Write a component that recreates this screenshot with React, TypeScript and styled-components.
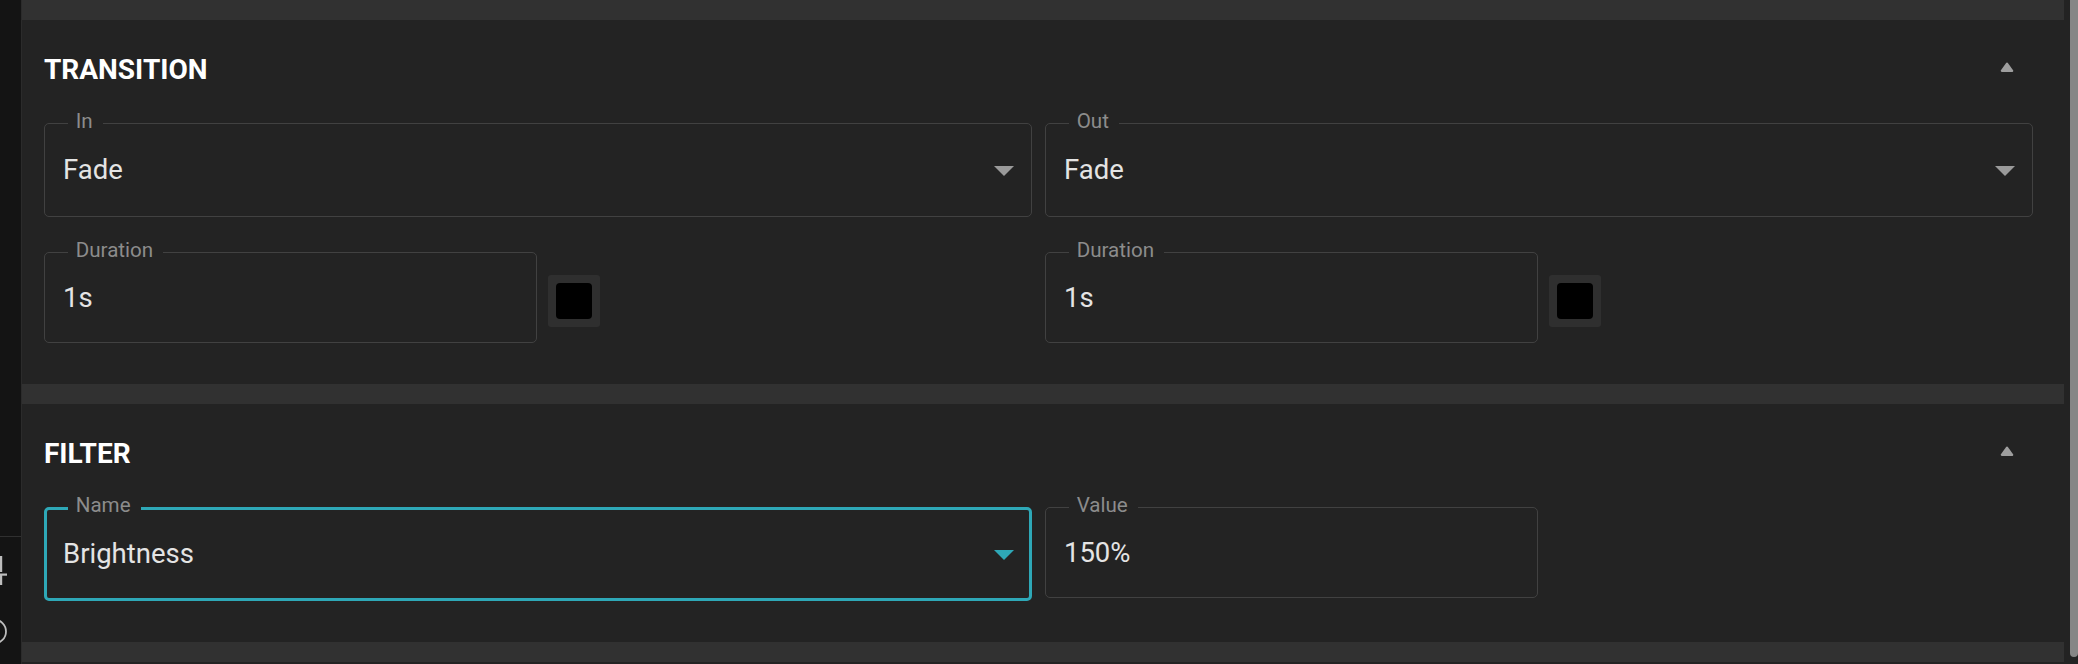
import React from "react";
import styled, { createGlobalStyle } from "styled-components";

const GlobalStyle = createGlobalStyle`
  html, body { margin: 0; padding: 0; background: #232323; }
  body { font-family: Roboto, "Noto Sans", Arial, sans-serif; overflow: hidden; }
  *, *::before, *::after { box-sizing: border-box; }
`;

const CYAN = "#2ea8b7";

const Screen = styled.div`
  display: flex;
  width: 2078px;
  height: 664px;
  background: #232323;
`;

const SideRail = styled.aside`
  width: 22px;
  flex: none;
  background: #141414;
  border-right: 1px solid #2b2b2b;
  display: flex;
  flex-direction: column;
  overflow: hidden;
`;

const RailTop = styled.div`
  height: 537px;
  border-bottom: 1px solid #303030;
  flex: none;
`;

const RailIcon = styled.svg<{ $gap: number }>`
  display: block;
  margin-top: ${(p) => p.$gap}px;
  color: #bdbdbd;
  flex: none;
`;

const Main = styled.main`
  width: 2042px;
  flex: none;
  align-self: flex-start;
  background: #313131;
  display: flex;
  flex-direction: column;
  gap: 20px;
  padding: 20px 0;
`;

const Gutter = styled.div`
  width: 6px;
  flex: none;
`;

const ScrollThumb = styled.div`
  width: 8px;
  height: 657px;
  flex: none;
  background: #868686;
  border-radius: 0 0 4px 4px;
`;

const Panel = styled.section`
  background: #232323;
  padding: 36px 30.7px 41px 22px;
  display: flex;
  flex-direction: column;
`;

const PanelHeader = styled.header`
  display: flex;
  justify-content: space-between;
  align-items: flex-start;
  height: 28px;
`;

const PanelTitle = styled.h2`
  margin: 0;
  font-family: Roboto, "Noto Sans", Arial, sans-serif;
  font-weight: 700;
  font-size: 28px;
  line-height: 28px;
  color: #ffffff;
`;

const CollapseButton = styled.button`
  background: none;
  border: none;
  padding: 0;
  margin: 6.4px 19px 0 0;
  width: 14px;
  height: 10px;
  display: flex;
  color: #9e9e9e;
  cursor: pointer;
`;

const FieldGrid = styled.div`
  display: grid;
  grid-template-columns: 1fr 1fr;
  column-gap: 12.6px;
  row-gap: 35.5px;
  margin-top: 38.5px;
`;

const FieldCell = styled.div`
  display: flex;
  align-items: flex-start;
  gap: 11px;
  min-width: 0;
`;

const FieldBox = styled.div<{ $focused?: boolean; $height: number; $half?: boolean }>`
  --bw: ${(p) => (p.$focused ? 3 : 1)}px;
  position: relative;
  flex: none;
  width: ${(p) => (p.$half ? "calc(50% - 1px)" : "100%")};
  height: ${(p) => p.$height}px;
  border: var(--bw) solid ${(p) => (p.$focused ? CYAN : "#414141")};
  border-radius: 5px;
  display: flex;
  align-items: center;
  padding: 0 calc(18.7px - var(--bw)) 0 calc(19px - var(--bw));
`;

const FieldLabel = styled.span`
  position: absolute;
  top: calc(-12px - var(--bw));
  left: calc(23.7px - var(--bw));
  padding: 0 10px 0 8px;
  background: #232323;
  font-size: 20.6px;
  line-height: 1;
  color: #8c8c8c;
  white-space: nowrap;
`;

const FieldValue = styled.span`
  flex: 1;
  font-size: 27.5px;
  line-height: 1.2;
  color: #e4e4e4;
  white-space: nowrap;
`;

const DropArrow = styled.svg<{ $focused?: boolean }>`
  flex: none;
  display: block;
  color: ${(p) => (p.$focused ? CYAN : "#9a9a9a")};
  margin-top: 2px;
`;

const Swatch = styled.button`
  flex: none;
  width: 52px;
  height: 52px;
  margin-top: 23.3px;
  padding: 8px;
  background: #2f2f2f;
  border: none;
  border-radius: 3px;
  cursor: pointer;
`;

const SwatchFill = styled.span`
  display: block;
  width: 36px;
  height: 36px;
  background: #000000;
  border-radius: 4px;
`;

const UpIcon = () => (
  <svg width="14" height="10" viewBox="0 0 14 10">
    <path
      d="M1.8 8.8 L7 1.6 L12.2 8.8 Z"
      fill="currentColor"
      stroke="currentColor"
      strokeWidth="2.2"
      strokeLinejoin="round"
    />
  </svg>
);

type SelectProps = { label: string; value: string; focused?: boolean };
const SelectField = ({ label, value, focused }: SelectProps) => (
  <FieldBox $height={94} $focused={focused}>
    <FieldLabel>{label}</FieldLabel>
    <FieldValue>{value}</FieldValue>
    <DropArrow $focused={focused} width="20" height="10" viewBox="0 0 20 10">
      <polygon points="0,0 20,0 10,10" fill="currentColor" />
    </DropArrow>
  </FieldBox>
);

type TextProps = { label: string; value: string };
const TextField = ({ label, value }: TextProps) => (
  <FieldBox $height={91} $half>
    <FieldLabel>{label}</FieldLabel>
    <FieldValue>{value}</FieldValue>
  </FieldBox>
);

type SectionProps = { title: string; children: React.ReactNode };
const Section = ({ title, children }: SectionProps) => (
  <Panel>
    <PanelHeader>
      <PanelTitle>{title}</PanelTitle>
      <CollapseButton aria-label="collapse">
        <UpIcon />
      </CollapseButton>
    </PanelHeader>
    <FieldGrid>{children}</FieldGrid>
  </Panel>
);

export default function App() {
  return (
    <>
      <GlobalStyle />
      <Screen>
        <SideRail>
          <RailTop />
          <RailIcon $gap={19} width="8" height="30" viewBox="0 0 8 30">
            <rect x="0" y="0" width="2.2" height="16" fill="currentColor" />
            <rect x="0" y="17.5" width="7" height="2.2" fill="currentColor" />
            <rect x="0" y="19" width="2.2" height="10" fill="currentColor" />
          </RailIcon>
          <RailIcon $gap={32} width="8" height="27" viewBox="0 0 8 27">
            <circle cx="-6" cy="13.5" r="12" fill="none" stroke="currentColor" strokeWidth="1.8" />
          </RailIcon>
        </SideRail>
        <Main>
          <Section title="TRANSITION">
            <FieldCell>
              <SelectField label="In" value="Fade" />
            </FieldCell>
            <FieldCell>
              <SelectField label="Out" value="Fade" />
            </FieldCell>
            <FieldCell>
              <TextField label="Duration" value="1s" />
              <Swatch aria-label="toggle">
                <SwatchFill />
              </Swatch>
            </FieldCell>
            <FieldCell>
              <TextField label="Duration" value="1s" />
              <Swatch aria-label="toggle">
                <SwatchFill />
              </Swatch>
            </FieldCell>
          </Section>
          <Section title="FILTER">
            <FieldCell>
              <SelectField label="Name" value="Brightness" focused />
            </FieldCell>
            <FieldCell>
              <TextField label="Value" value="150%" />
            </FieldCell>
          </Section>
        </Main>
        <Gutter />
        <ScrollThumb />
      </Screen>
    </>
  );
}
